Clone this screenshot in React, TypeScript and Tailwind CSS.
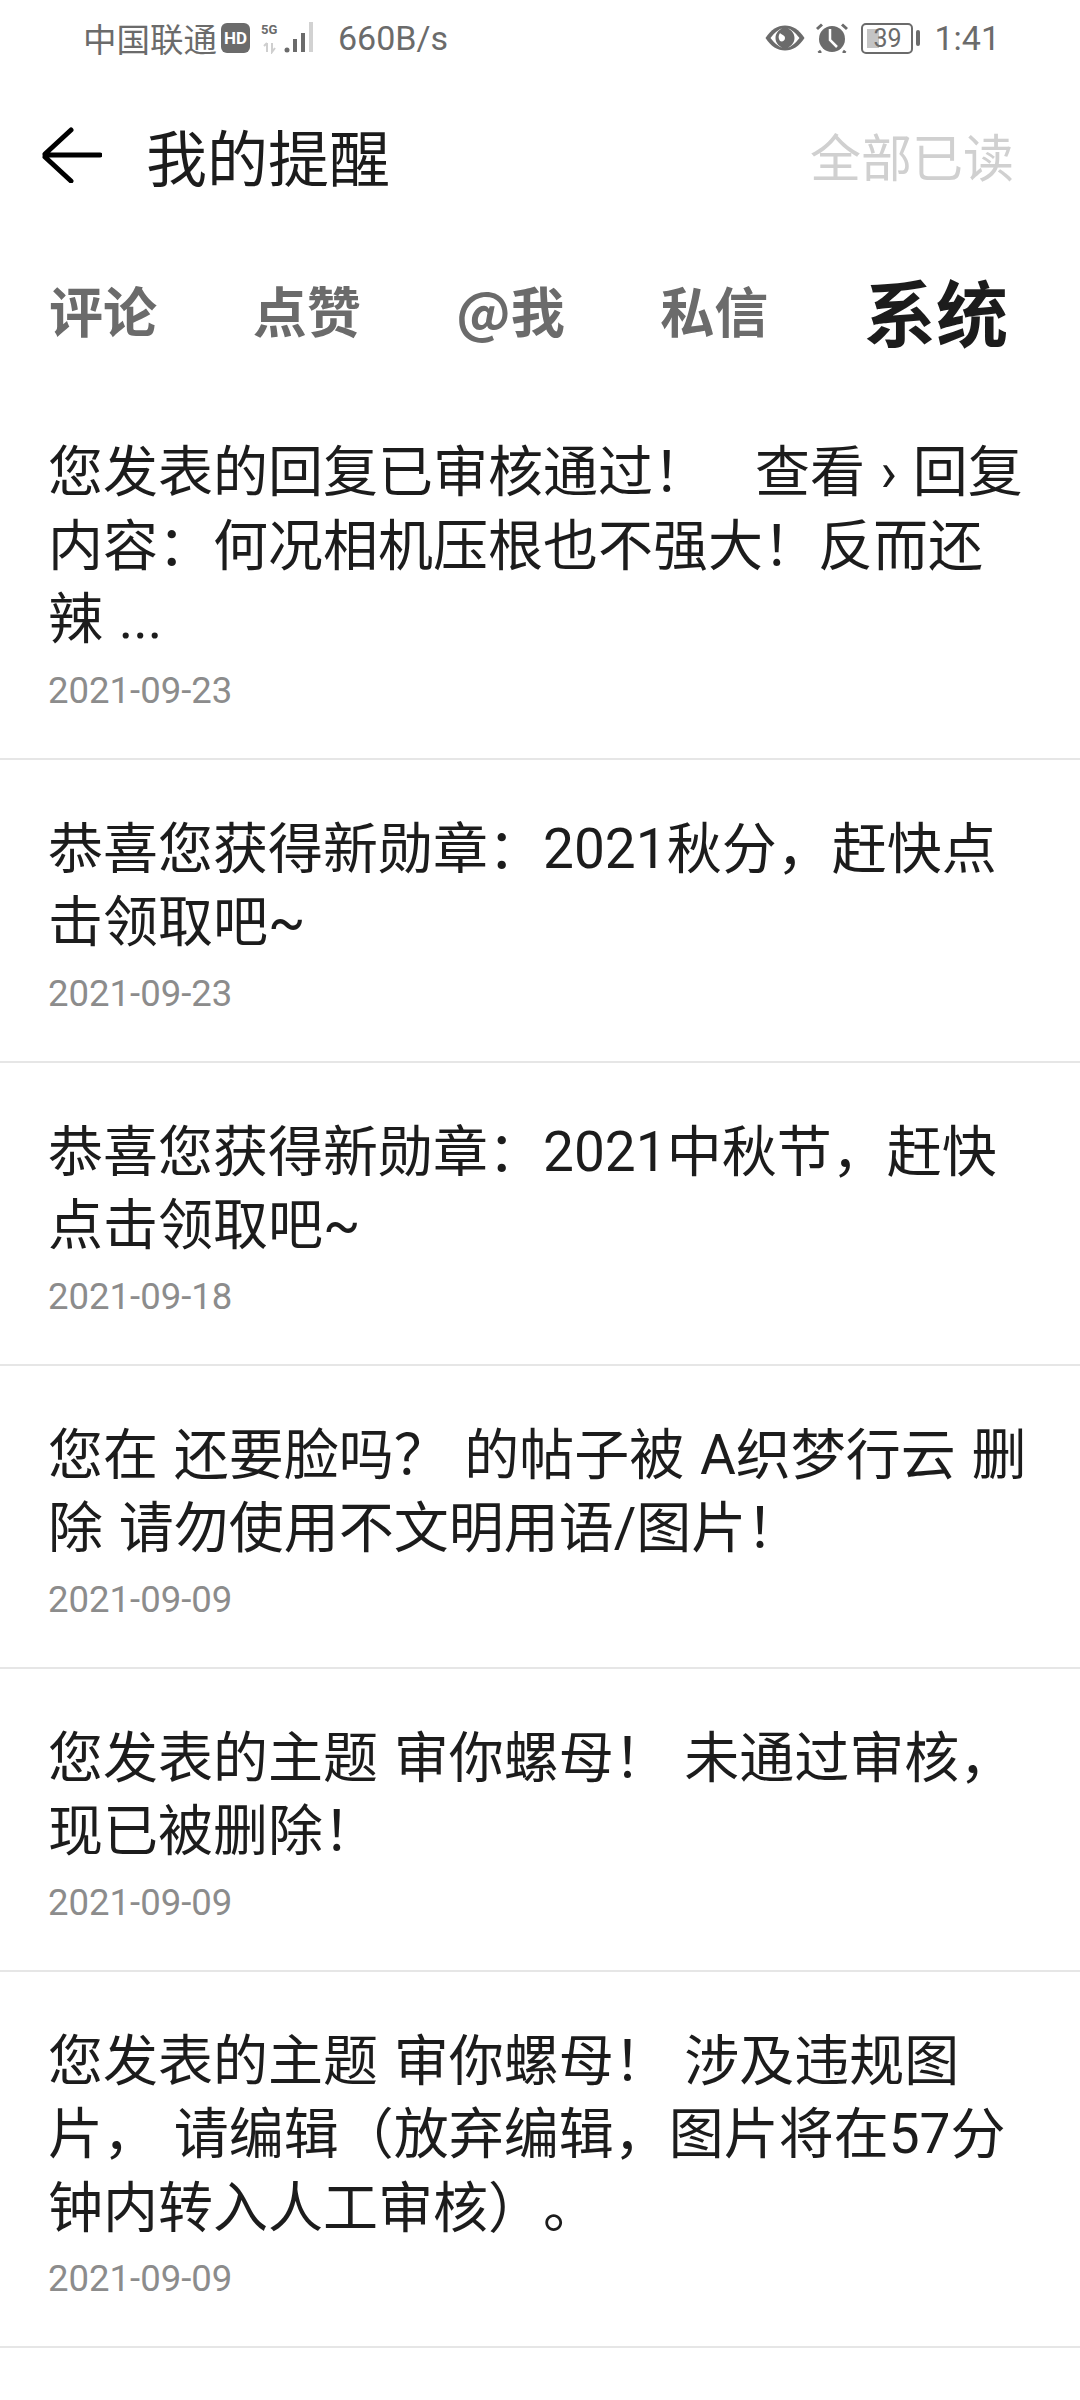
const font = { fontFamily: '"Roboto","Noto Sans CJK SC",sans-serif' };
const cjk = { fontFamily: '"Noto Sans CJK SC",sans-serif' };

const items: { text: string; date: string }[] = [
  { text: "您发表的回复已审核通过！\u00a0\u00a0\u00a0查看 › 回复内容：何况相机压根也不强大！反而还辣 ...", date: "2021-09-23" },
  { text: "恭喜您获得新勋章：2021秋分，赶快点击领取吧~", date: "2021-09-23" },
  { text: "恭喜您获得新勋章：2021中秋节，赶快点击领取吧~", date: "2021-09-18" },
  { text: "您在 还要脸吗？ 的帖子被 A织梦行云 删除 请勿使用不文明用语/图片！", date: "2021-09-09" },
  { text: "您发表的主题 审你螺母！ 未通过审核，现已被删除！", date: "2021-09-09" },
  { text: "您发表的主题 审你螺母！ 涉及违规图片， 请编辑（放弃编辑，图片将在57分钟内转入人工审核）。", date: "2021-09-09" },
];

function StatusLeft() {
  return (
    <div className="flex items-center text-[34px] leading-none text-[#6b6b6b]">
      <span className="text-[33.5px]" style={cjk}>中国联通</span>
      <span className="ml-[4px] flex h-[30px] w-[29px] items-center justify-center rounded-[6px] bg-[#6b6b6b] text-[17px] font-bold text-white">HD</span>
      <svg className="ml-[11px]" width="52" height="32" viewBox="0 0 52 32">
        <text x="0" y="12" fontSize="13" fontWeight="700" fill="#6b6b6b" fontFamily="Roboto">5G</text>
        <path d="M6 21v9M3 24l3-3M11 21v9l3-4" stroke="#cfcfcf" strokeWidth="2" fill="none" />
        <circle cx="26" cy="28" r="2.500" fill="#6b6b6b" />
        <rect x="32" y="17" width="4" height="13" fill="#6b6b6b" />
        <rect x="40" y="11" width="4" height="19" fill="#6b6b6b" />
        <rect x="48" y="0" width="4" height="30" fill="#d2d2d2" />
      </svg>
      <span className="ml-[25px]">660B/s</span>
    </div>
  );
}

function StatusRight() {
  return (
    <div className="flex items-center text-[#6b6b6b]">
      <svg width="40" height="26" viewBox="0 0 40 26">
        <path d="M0.500 13C6 4.500 12.500 0.500 20 0.500S34 4.500 39.500 13C34 21.500 27.500 25.500 20 25.500S6 21.500 0.500 13Z" fill="#6b6b6b" />
        <path d="M5.500 13C10 7 14.500 4 17 3.500c-4 2-6.500 5.500-6.500 9.500s2.500 7.500 6.500 9.500C14.500 22 10 19 5.500 13Z" fill="#fff" />
        <path d="M34.500 13C30 7 25.500 4 23 3.500c4 2 6.500 5.500 6.500 9.500s-2.500 7.500-6.500 9.500C25.500 22 30 19 34.500 13Z" fill="#fff" />
        <path d="M15 8a7 7 0 0 0 0 8c2 1 5 0 5-3s-3-3-5-5Z" fill="#fff" />
      </svg>
      <svg className="ml-[10px]" width="34" height="30" viewBox="0 0 34 30">
        <circle cx="17" cy="16" r="13" fill="#6b6b6b" />
        <path d="M15 6v11l7 7" stroke="#fff" strokeWidth="2.500" fill="none" />
        <path d="M2 6l5-4.500M32 6l-5-4.500M6 28l-2.500 2M28 28l2.500 2" stroke="#6b6b6b" strokeWidth="3" />
      </svg>
      <div className="relative ml-[12px] flex h-[31px] w-[52px] items-center justify-center overflow-hidden rounded-[5px] border-2 border-[#6b6b6b] text-[25px] leading-none">
        <div className="absolute top-[4px] bottom-[4px] left-[4px] w-[12px] bg-[#c4c4c4]" />
        <span className="relative">39</span>
      </div>
      <div className="ml-[3px] h-[16px] w-[4px] rounded-[2px] bg-[#6b6b6b]" />
      <span className="ml-[14px] text-[34px] leading-none">1:41</span>
    </div>
  );
}

export default function App() {
  return (
    <div className="flex h-[2400px] w-[1080px] flex-col overflow-hidden bg-white [text-spacing-trim:space-all]" style={font}>
      <div className="flex h-[76px] items-center justify-between pr-[80px] pl-[83px]">
        <StatusLeft />
        <StatusRight />
      </div>
      <div className="mt-[38px] flex h-[82px] items-center justify-between pr-[66px] pl-[42px]">
        <div className="flex items-center">
          <svg width="60" height="56" viewBox="0 0 60 56" fill="none" stroke="#000" strokeWidth="5" strokeLinecap="round" strokeLinejoin="round">
            <path d="M58 28H3M29 3 3 27M3 30l26 24" />
          </svg>
          <span className="ml-[44px] text-[61px] leading-none text-[#1c1c1c]" style={cjk}>我的提醒</span>
        </div>
        <span className="text-[51px] leading-none text-[#d0d0d0]" style={cjk}>全部已读</span>
      </div>
      <div className="mt-[73px] flex h-[82px] items-center justify-between pr-[72px] pl-[49px] font-bold text-[#6b6b6b]" style={cjk}>
        <span className="text-[54px] leading-none">评论</span>
        <span className="text-[54px] leading-none">点赞</span>
        <span className="text-[54px] leading-none">@我</span>
        <span className="text-[54px] leading-none">私信</span>
        <span className="text-[72px] leading-none text-[#1c1c1c]">系统</span>
      </div>
      <div className="mt-[32px] flex flex-col">
        {items.map((it, i) => (
          <div key={i} className="border-b-2 border-[#e6e6e6] px-[48px] pt-[53px] pb-[45px]">
            <div className="text-[55px] leading-[73.5px] text-[#1c1c1c] [word-spacing:2px]">{it.text}</div>
            <div className="mt-[12px] text-[36.5px] leading-[44px] text-[#8c8c8c]">{it.date}</div>
          </div>
        ))}
      </div>
    </div>
  );
}
